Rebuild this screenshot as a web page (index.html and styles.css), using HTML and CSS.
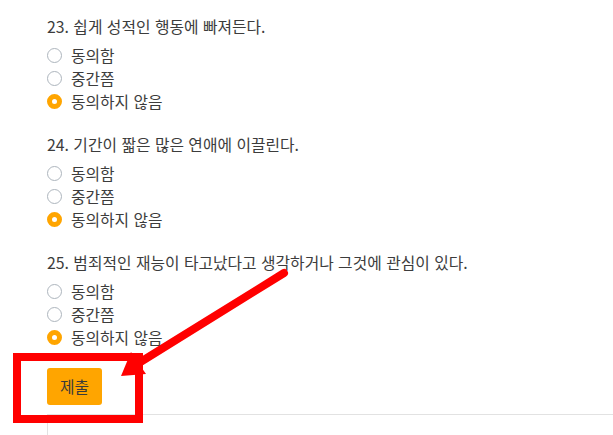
FILE: index.html
```html
<!DOCTYPE html>
<html lang="ko">
<head>
    <meta charset="UTF-8">
    <title>설문</title>
    <link rel="stylesheet" href="styles.css">
</head>
<body>
<div class="page">
    <form class="survey" action="#" method="get">
        <div class="question">
            <p class="q_title">23. 쉽게 성적인 행동에 빠져든다.</p>
            <label class="option"><input type="radio" name="q23" value="1"> 동의함</label>
            <label class="option"><input type="radio" name="q23" value="2"> 중간쯤</label>
            <label class="option"><input type="radio" name="q23" value="3" checked> 동의하지 않음</label>
        </div>
        <div class="question">
            <p class="q_title">24. 기간이 짧은 많은 연애에 이끌린다.</p>
            <label class="option"><input type="radio" name="q24" value="1"> 동의함</label>
            <label class="option"><input type="radio" name="q24" value="2"> 중간쯤</label>
            <label class="option"><input type="radio" name="q24" value="3" checked> 동의하지 않음</label>
        </div>
        <div class="question">
            <p class="q_title">25. 범죄적인 재능이 타고났다고 생각하거나 그것에 관심이 있다.</p>
            <label class="option"><input type="radio" name="q25" value="1"> 동의함</label>
            <label class="option"><input type="radio" name="q25" value="2"> 중간쯤</label>
            <label class="option"><input type="radio" name="q25" value="3" checked> 동의하지 않음</label>
        </div>
        <button type="submit" class="btn_submit">제출</button>
    </form>
    <div class="result_box"></div>

    <!-- 빨간 표시 -->
    <svg class="mark" width="613" height="435" viewBox="0 0 613 435">
        <rect x="17" y="357" width="122" height="62" fill="none" stroke="#ff0000" stroke-width="8"/>
        <line x1="284" y1="273" x2="134" y2="366" stroke="#ff0000" stroke-width="8" stroke-linecap="round"/>
        <polygon points="121,376 131,352 146,374" fill="#ff0000"/>
    </svg>
</div>
</body>
</html>
```

FILE: styles.css
```css
body{
    margin: 0;
    background: #ffffff;
    font-family: "Noto Sans CJK KR", "Noto Sans", sans-serif;
    font-size: 15.8px;
    color: #3c3c3c;
}
.page{
    position: relative;
    width: 613px;
    height: 435px;
    overflow: hidden;
}
.survey{
    padding: 17px 0 0 47px;
}
.question{
    margin-bottom: 22px;
}
.q_title{
    margin: 0 0 7px 0;
    line-height: 20px;
}
.option{
    display: flex;
    align-items: center;
    gap: 9px;
    height: 23px;
    line-height: 23px;
}
/*라디오 버튼*/
.option input{
    appearance: none;
    margin: 0;
    width: 15px;
    height: 15px;
    border: 1px solid #adb5bd;
    border-radius: 50%;
    background: #ffffff;
    box-sizing: border-box;
}
.option input:checked{
    border: 5px solid #ffa500;
    background: #ffffff;
}
.btn_submit{
    margin-top: -3px;
    width: 55px;
    height: 37px;
    border: none;
    border-radius: 3px;
    background: #ffa500;
    color: #3a3a3a;
    font-family: inherit;
    font-size: 15.8px;
}
.result_box{
    margin: 9px 0 0 47px;
    height: 40px;
    border-top: 1px solid #e2e2e2;
    border-left: 1px solid #e2e2e2;
}
.mark{
    position: absolute;
    left: 0;
    top: 0;
}
```
